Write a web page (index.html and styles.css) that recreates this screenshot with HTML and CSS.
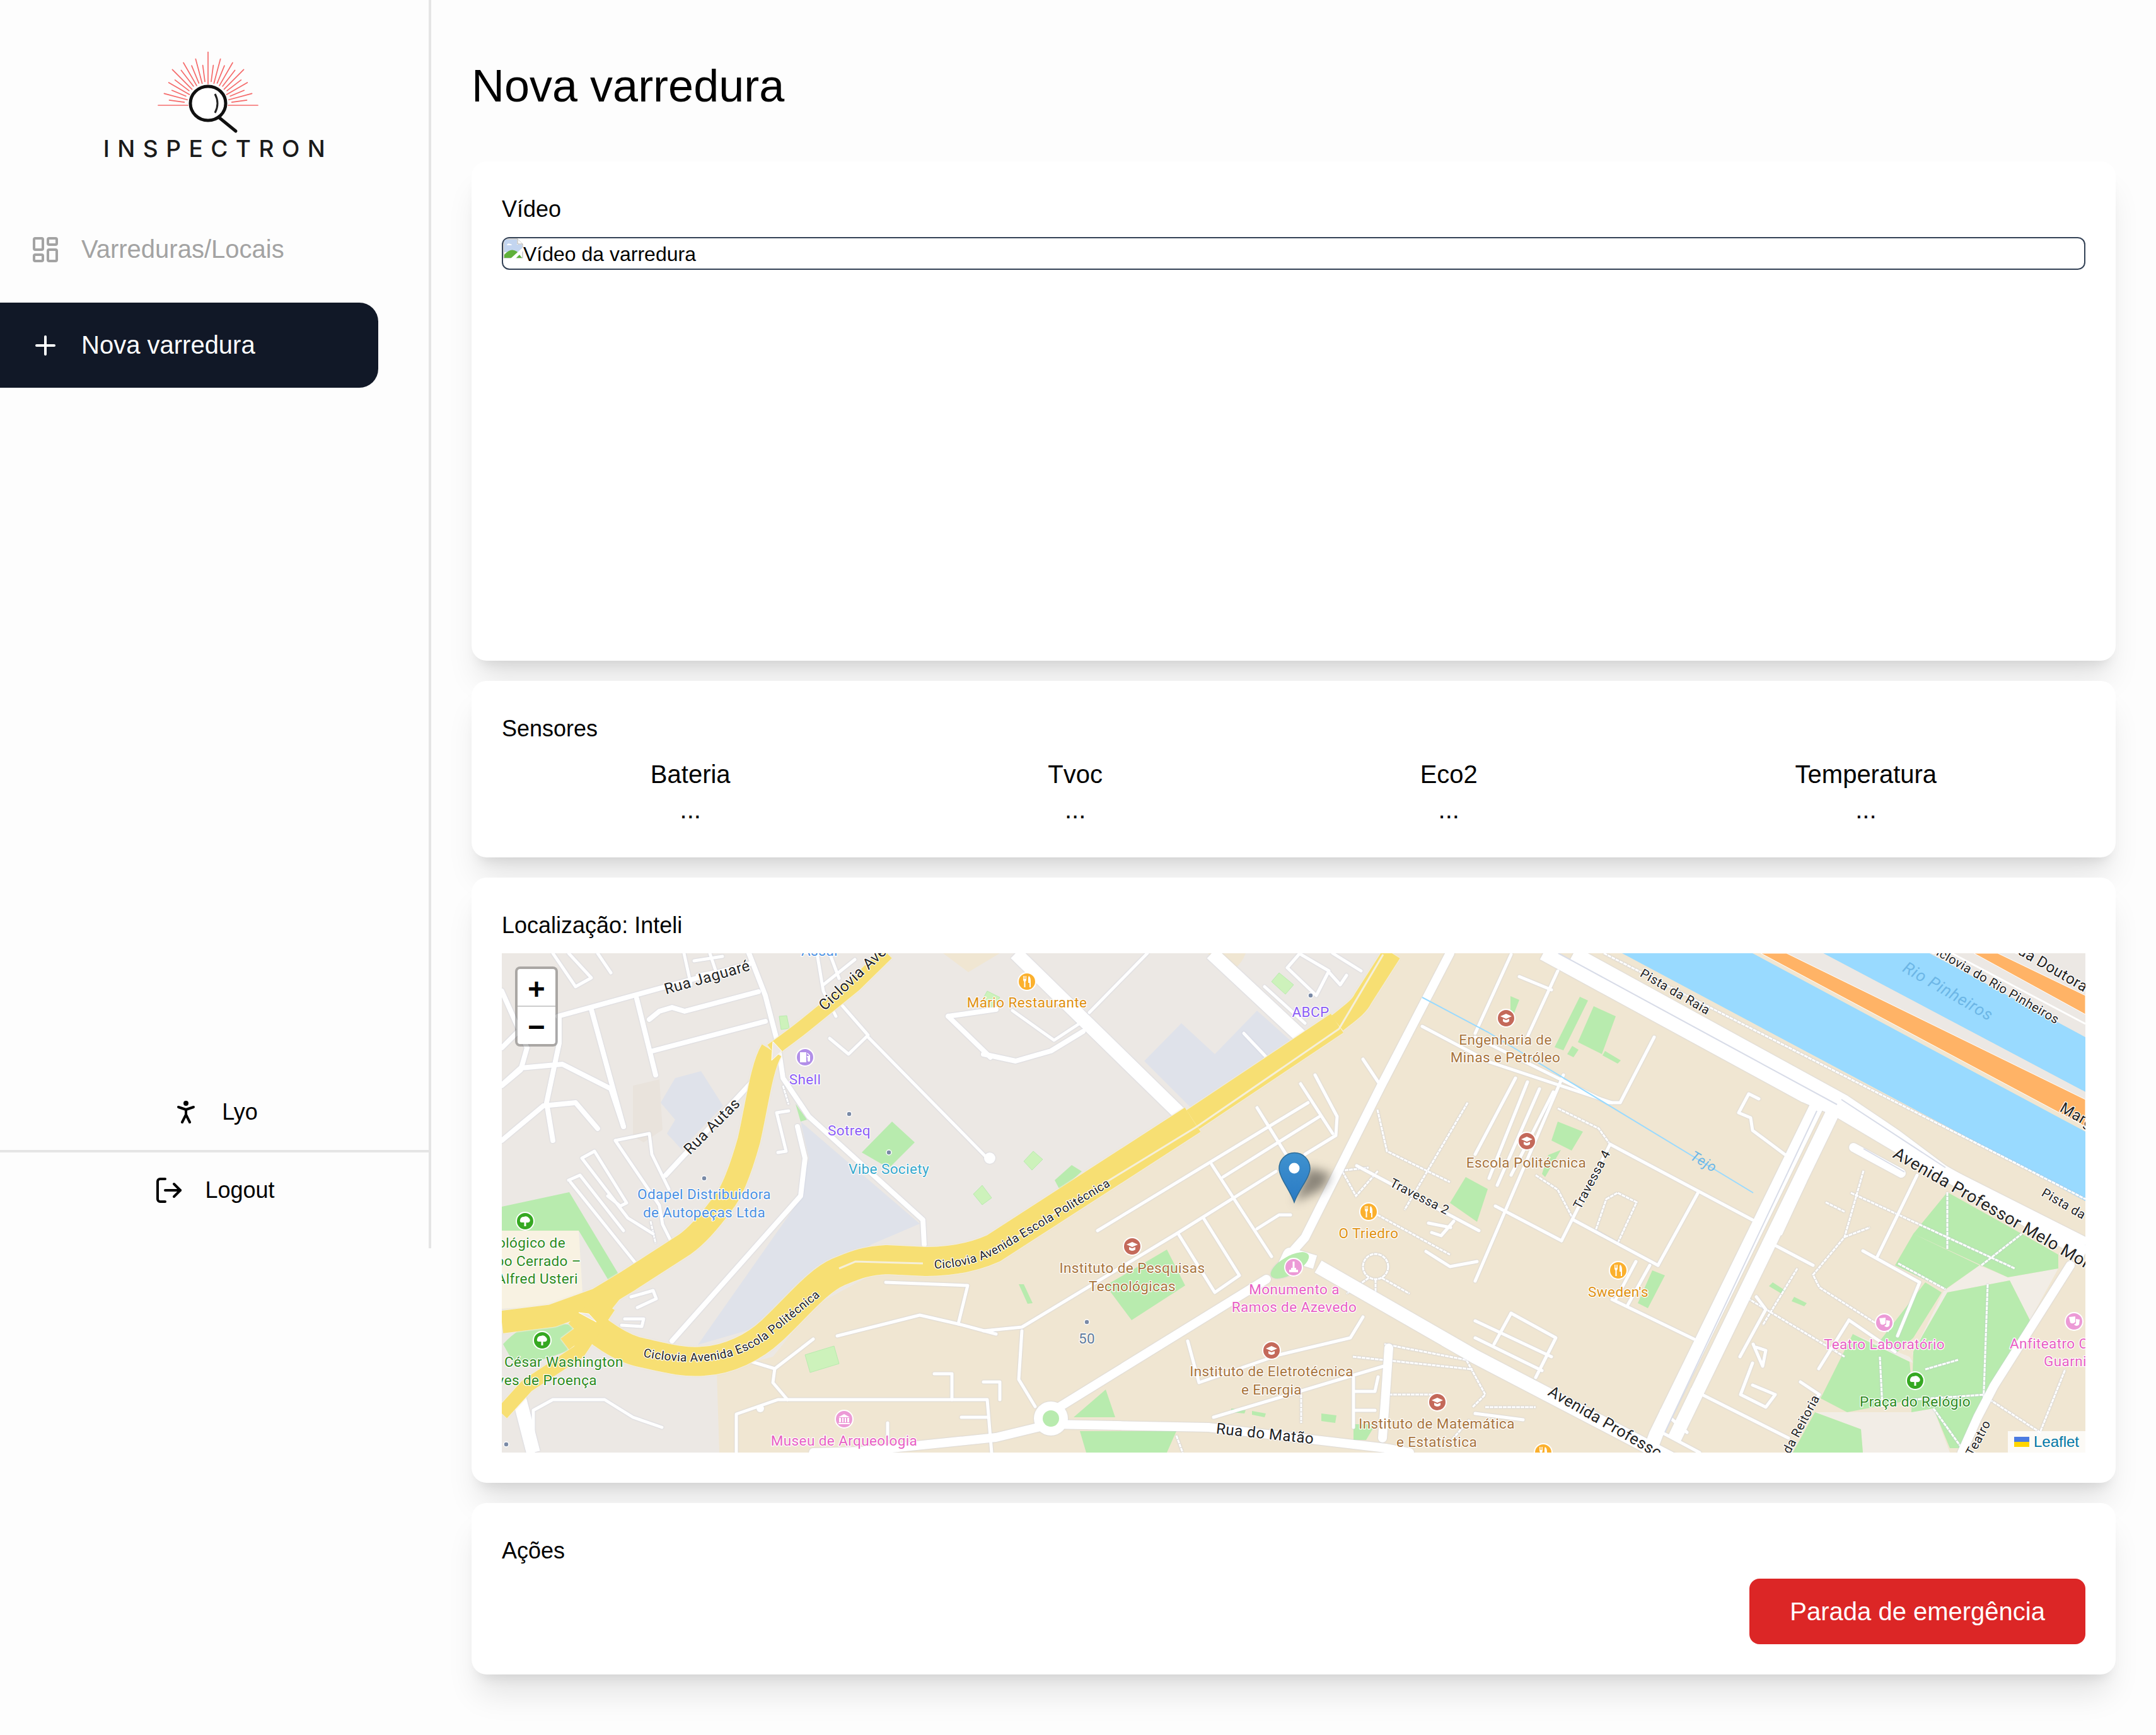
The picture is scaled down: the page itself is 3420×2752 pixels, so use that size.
FILE: index.html
```html
<!DOCTYPE html>
<html lang="pt-BR">
<head>
<meta charset="utf-8">
<title>Nova varredura</title>
<link rel="stylesheet" href="styles.css">
</head>
<body>
<div class="app">
  <aside class="sidebar">
    <div class="logo">
      <svg class="logo-mark" viewBox="0 0 168 130" width="168" height="130" aria-hidden="true">
        <g class="rays" transform="translate(80 85)">
          <line y1="-32" y2="-79" transform="rotate(-90)"/><line y1="-38" y2="-62" transform="rotate(-82.5)"/><line y1="-34" y2="-72" transform="rotate(-75)"/><line y1="-38" y2="-62" transform="rotate(-67.5)"/><line y1="-34" y2="-72" transform="rotate(-60)"/><line y1="-38" y2="-66" transform="rotate(-52.5)"/><line y1="-36" y2="-80" transform="rotate(-45)"/><line y1="-38" y2="-70" transform="rotate(-37.5)"/><line y1="-36" y2="-78" transform="rotate(-30)"/><line y1="-38" y2="-68" transform="rotate(-22.5)"/><line y1="-36" y2="-76" transform="rotate(-15)"/><line y1="-38" y2="-64" transform="rotate(-7.5)"/><line y1="-34" y2="-85" transform="rotate(0)"/><line y1="-38" y2="-64" transform="rotate(7.5)"/><line y1="-36" y2="-76" transform="rotate(15)"/><line y1="-38" y2="-68" transform="rotate(22.5)"/><line y1="-36" y2="-78" transform="rotate(30)"/><line y1="-38" y2="-70" transform="rotate(37.5)"/><line y1="-36" y2="-80" transform="rotate(45)"/><line y1="-38" y2="-66" transform="rotate(52.5)"/><line y1="-34" y2="-72" transform="rotate(60)"/><line y1="-38" y2="-62" transform="rotate(67.5)"/><line y1="-34" y2="-72" transform="rotate(75)"/><line y1="-38" y2="-62" transform="rotate(82.5)"/><line y1="-32" y2="-79" transform="rotate(90)"/>
        </g>
        <ellipse class="lens-bg" cx="80" cy="82" rx="29" ry="28"/>
        <ellipse class="lens" cx="80" cy="82" rx="28" ry="27"/>
        <path class="lens-thin" d="M91 67 Q99 82 91 97"/>
        <path class="lens" d="M97 104 L124 126"/>
      </svg>
      <div class="logo-word">INSPECTRON</div>
    </div>
    <nav class="nav">
      <a class="nav-item">
        <svg class="icon" viewBox="0 0 24 24"><rect x="3" y="3" width="7" height="9" rx="1"/><rect x="14" y="3" width="7" height="5" rx="1"/><rect x="14" y="12" width="7" height="9" rx="1"/><rect x="3" y="16" width="7" height="5" rx="1"/></svg>
        <span>Varreduras/Locais</span>
      </a>
      <a class="nav-item active">
        <svg class="icon" viewBox="0 0 24 24"><path d="M5 12h14"/><path d="M12 5v14"/></svg>
        <span>Nova varredura</span>
      </a>
    </nav>
    <div class="side-foot">
      <div class="foot-row foot-user">
        <svg class="icon" viewBox="0 0 24 24"><circle cx="12" cy="5" r="1"/><path d="m9 20 3-6 3 6"/><path d="m6 8 6 2 6-2"/><path d="M12 10v4"/></svg>
        <span>Lyo</span>
      </div>
      <div class="foot-row">
        <svg class="icon" viewBox="0 0 24 24"><path d="M9 21H5a2 2 0 0 1-2-2V5a2 2 0 0 1 2-2h4"/><path d="M16 17l5-5-5-5"/><path d="M21 12H9"/></svg>
        <span>Logout</span>
      </div>
    </div>
  </aside>

  <main class="main">
    <h1 class="title">Nova varredura</h1>

    <section class="card">
      <h2 class="card-label">Vídeo</h2>
      <div class="video-frame">
        <div class="broken">
          <svg class="broken-icon" viewBox="0 0 32 32" width="32" height="32" aria-hidden="true">
            <path class="bi-page" d="M1 1H23L31 9V31H1Z"/>
            <path class="bi-fold" d="M23 1V9H31"/>
            <path class="bi-sky" d="M2 2H22V10H30V22H2Z"/>
            <path class="bi-cloud" d="M6 11a3 3 0 0 1 5-2a2.500 2.500 0 0 1 3 2Z"/>
            <path class="bi-hill" d="M2 31V26Q12 14 22 21L30 31Z"/>
            <path class="bi-tear" d="M12 32L32 14V20L20 32Z"/>
          </svg>
          <span>Vídeo da varredura</span>
        </div>
      </div>
    </section>

    <section class="card">
      <h2 class="card-label">Sensores</h2>
      <div class="sensors">
        <div class="sensor"><div>Bateria</div><div>...</div></div>
        <div class="sensor"><div>Tvoc</div><div>...</div></div>
        <div class="sensor"><div>Eco2</div><div>...</div></div>
        <div class="sensor"><div>Temperatura</div><div>...</div></div>
      </div>
    </section>

    <section class="card">
      <h2 class="card-label">Localização: Inteli</h2>
      <div class="map">
        <svg class="map-svg" viewBox="0 0 2512 792" width="2512" height="792" aria-label="Mapa">
          <defs>
            <path id="t-cic1" d="M224 640 C290 652 360 655 420 612 L500 548 L520 530"/>
            <path id="t-cic2" d="M686 500 C720 500 760 492 800 468 L980 360"/>
            <symbol id="i-edu" viewBox="-15 -15 30 30" overflow="visible"><circle class="ic-edu" r="14"/><path class="gl" d="M-9 -3 L0 -7 L9 -3 L0 1Z M-5 1 V5 Q0 9 5 5 V1 L0 3Z"/></symbol>
            <symbol id="i-food" viewBox="-15 -15 30 30" overflow="visible"><circle class="ic-food" r="14"/><path class="gl" d="M-6 -9 H-5 V-4 H-4 V-9 H-3 V-4 H-2 V-9 H-1 V-3 Q-1 -1 -2.500 0 V9 H-4.500 V0 Q-6 -1 -6 -3Z M3 -9 Q6 -7 6 -1 V9 H4 V2 H2 V-5 Q2 -8 3 -9Z"/></symbol>
            <symbol id="i-tree" viewBox="-15 -15 30 30" overflow="visible"><circle class="ic-tree" r="14"/><path class="gl" d="M-1.500 8 V2 H-6 Q-9 1 -8 -2 Q-7 -7 -2 -7 Q3 -9 6 -5 Q9 -2 7 1 Q5 3 1.500 2 V8Z"/></symbol>
            <symbol id="i-art" viewBox="-15 -15 30 30" overflow="visible"><circle class="ic-art" r="14"/><path class="gl" d="M-8 -7 L2 -8 L2 1 Q-2 5 -6 2Z M3 -4 L9 -3 L8 5 Q4 9 0 5 L3 3Z"/></symbol>
            <symbol id="i-mus" viewBox="-15 -15 30 30" overflow="visible"><circle class="ic-art" r="14"/><path class="gl" d="M-9 -3 L0 -8 L9 -3Z M-8 -2 H-5 V5 H-8Z M-3 -2 H-1 V5 H-3Z M1 -2 H3 V5 H1Z M5 -2 H8 V5 H5Z M-9 6 H9 V8 H-9Z"/></symbol>
            <symbol id="i-mon" viewBox="-15 -15 30 30" overflow="visible"><circle class="ic-art" r="14"/><path class="gl" d="M-1.500 -9 H1.500 V1 H4 V4 H7 V8 H-7 V4 H-4 V1 H-1.500Z"/></symbol>
            <symbol id="i-fuel" viewBox="-15 -15 30 30" overflow="visible"><circle class="ic-fuel" r="14"/><path class="gl" d="M-8 -8 H2 V8 H-8Z M4 -7 L8 -3 V5 Q8 7 6 7 Q4 7 4 5 V0 H3 V-2 H6 V-3 L3 -6Z"/></symbol>
            <linearGradient id="pin" x1="0" y1="0" x2="0" y2="1"><stop offset="0" stop-color="#3f92cf"/><stop offset="1" stop-color="#2a7ac4"/></linearGradient>
            <filter id="blur6" x="-60%" y="-60%" width="220%" height="220%"><feGaussianBlur stdDeviation="8"/></filter>
          </defs>

          <path class="a-beige" d="M345 792 L341 664 L430 640 L494 560 L596 505 L700 495 L784 480 L1096 270 L1325 120 L1402 0 H2512 V792Z"/>
          <path class="a-beige" d="M1120 0 H1180 Q1170 25 1150 30Z"/>
          <path class="a-beige" d="M740 30 L790 0 H700 Z"/>

          <path class="a-pale" d="M0 440 H122 L128 538 L82 560 L0 564Z"/>
          <path class="a-green" d="M0 402 L107 379 L190 517 L173 525 L122 440 L66 440 L0 440Z"/>
          <path class="a-green" d="M2 620 Q30 590 60 585 L120 590 L128 606 L106 630 Q50 652 20 652Z"/>

          <path class="a-plaza" d="M2083 728 L2134 728 L2236 728 L2271 722 L2297 792 H2159 L2156 755Z M2287 536 L2344 495 L2389 514 L2469 500 L2424 582 L2392 519 L2293 538Z M2236 640 L2287 536 L2293 538 L2239 632Z M2143 604 L2233 640 L2239 650 L2180 625Z"/>
          <path class="a-green" d="M2293 379 L2411 445 L2347 495 L2239 445Z M2411 445 L2469 478 L2469 500 L2389 514 L2347 495Z M2239 445 L2344 495 L2290 533 L2210 495Z M2293 538 L2392 519 L2424 582 L2354 719 L2316 785 L2297 785 L2271 722 L2236 728 L2239 632Z M2143 604 L2233 648 L2239 708 L2134 728 L2092 706Z M2284 538 L2239 610 L2214 632 L2182 620 L2258 522Z M2083 728 L2156 755 L2159 792 H2048Z"/>

          <path class="a-water" d="M1777 0 H1984 L2512 283 V393 L2405 335Z"/>
          <path class="a-water" d="M2096 0 H2265 L2512 133 V220Z"/>
          <path class="a-grey" d="M2038 0 H2096 L2512 220 V232Z"/>
          <path class="a-grey" d="M2265 0 H2512 V133Z"/>
          <path class="a-orange" d="M1997 0 H2038 L2512 232 V275Z"/>
          <path class="a-orange" d="M2335 0 H2373 L2512 67 V97Z"/>
          <path class="a-ylw" d="M2440 0 H2512 V30Z"/>
          <path class="r-case-w" d="M2300 0 L2512 112"/>

          <path class="a-park" d="M252 237 L275 198 L316 187 L351 242 L285 311 L262 286 L275 264Z"/>
          <path class="a-park" d="M474 267 L663 429 L586 462 L509 516 L408 593 L311 621 L469 396 L487 325Z"/>
          <path class="a-park" d="M1019 171 L1078 111 L1131 160 L1198 91 L1256 143 L1096 248Z"/>
          <path class="a-tan" d="M208 210 L250 200 L255 280 L225 300 L208 290Z"/>

          <path class="a-green" d="M619 267 L655 300 L614 341 L571 316Z M904 336 L920 346 L886 377 L877 360Z M466 239 L484 264 L474 267Z M1055 470 L1084 527 L999 582 L958 527Z M958 692 L973 736 L907 736Z M917 758 L1070 758 L1055 792 L927 792Z M1504 396 L1529 355 L1564 374 L1547 426Z M1351 747 L1386 747 L1371 772 L1351 772Z M1710 69 L1723 75 L1684 154 L1670 149Z M1732 84 L1767 100 L1745 160 L1707 141Z M1675 267 L1715 283 L1697 313 L1665 297Z M1825 503 L1845 511 L1818 563 L1802 555Z M820 525 L828 525 L842 555 L834 556Z M1600 68 L1614 74 L1600 110Z M1698 147 L1708 153 L1700 165 L1690 160Z M1750 155 L1775 170 L1770 175 L1746 162Z M1660 320 L1680 312 L1655 355 L1650 350Z M2016 522 L2036 535 L2030 540 L2010 528Z M2050 545 L2070 555 L2066 560 L2046 552Z M1157 722 L1180 725 L1178 730 L1157 728Z M1190 726 L1212 730 L1210 736 L1190 732Z M1300 730 L1324 733 L1322 745 L1300 742Z"/>
          <path class="a-pale-g" d="M440 100 L452 99 L456 119 L443 121Z M762 368 L777 388 L762 399 L748 382Z M843 314 L858 327 L841 344 L828 330Z M481 637 L527 623 L535 651 L489 665Z M1233 31 L1256 50 L1243 65 L1221 45Z M770 60 L790 70 L778 88 L760 78Z"/>

          <g class="r-dash">
            <path d="M1748 0 L2405 335 L2512 390"/>
            <path d="M1389 248 L1404 314 L1504 363"/><path d="M1532 237 L1432 407"/><path d="M1330 345 L1375 340"/><path d="M1389 415 L1504 478"/><path d="M1330 340 L1355 385 L1390 345"/>
            <circle cx="1386" cy="497" r="20"/><path d="M1375 515 L1340 540"/><path d="M1396 515 L1440 540"/><path d="M1386 517 V550"/>
            <path d="M1675 246 L1740 278 L1758 303"/><path d="M1640 352 L1675 375 L1700 423"/><path d="M1752 390 L1770 380 L1800 395 L1770 460 L1735 440Z"/>
            <path d="M2160 345 L2130 450 L2080 510 L2090 530 L2200 600"/><path d="M2100 395 L2130 410"/><path d="M2140 380 L2400 500"/><path d="M2130 450 L2170 435"/>
            <path d="M1964 540 L2130 640"/><path d="M2055 500 L2000 590"/><path d="M2293 379 V470"/><path d="M2347 495 L2411 445"/><path d="M2357 525 L2350 720"/>
            <path d="M2215 492 L2290 533"/><path d="M2186 640 L2190 720"/><path d="M2258 660 L2310 645"/><path d="M2271 722 L2316 785"/><path d="M2239 708 L2354 700"/>
            <path d="M1400 620 L1530 645 L1560 700 L1540 720"/><path d="M1350 640 L1540 660"/><path d="M2348 700 L2440 760 L2480 660"/><path d="M1560 720 L1640 720"/>
            <path d="M1070 765 L1080 792"/><path d="M1268 700 V745"/><path d="M1400 700 L1480 700"/><path d="M1535 740 L1500 780"/>
            <path d="M509 527 L561 489 L668 492"/><path d="M446 210 L455 240"/><path d="M236 425 L244 460"/>
          </g>

          <g class="roads">
            <g class="w8">
              <path d="M89 100 L260 53 L392 17"/><path d="M214 72 L244 193"/><path d="M142 89 L193 275"/><path d="M234 105 L250 92 L270 86 L290 92 L407 61"/><path d="M239 155 L418 108"/>
              <path d="M91 100 L91 143 L71 237 L81 297"/><path d="M0 209 L30 182 L96 176 L173 215 L193 275"/><path d="M0 297 L66 242 L117 237 L152 278"/><path d="M260 352 L397 204"/><path d="M270 615 L474 385 L481 325 L469 275"/>
              <path d="M392 0 L418 67 L438 144 L446 198 L487 259 L668 423 L670 462"/><path d="M708 100 L775 165 M708 100 L784 89"/><path d="M764 160 L815 171 L871 155 L922 124"/>
              <path d="M0 60 L40 150 L30 185 L0 210"/><path d="M0 150 L40 110"/>
            </g>
            <g class="w5">
              <path d="M81 0 L117 53 L142 39 L106 0"/><path d="M152 0 L173 31"/><path d="M289 0 L300 50 M305 12 L350 5 M310 35 L335 30 M330 0 L340 30"/><path d="M180 297 L234 286 L238 319 L265 374 M180 297 L250 400 L255 430 L275 470"/>
              <path d="M127 325 L147 314 L198 396 L188 401 L168 385 M127 325 L200 420 L240 445"/><path d="M106 360 L124 352 L193 440 M109 363 L219 500"/>
              <path d="M436 253 L451 314 L438 316 M436 253 L455 250"/><path d="M581 133 L770 325"/><path d="M540 83 L581 130 L550 160 L520 135"/><path d="M810 91 L876 138 L917 111"/><path d="M932 94 L1024 0"/>
              <path d="M500 0 L510 60 L530 100 M520 0 L535 40 M510 50 L560 10"/><path d="M1177 127 L1213 165 L1187 193"/><path d="M1246 23 L1266 0 M1246 23 L1292 67 L1312 28 L1266 1 M1312 30 L1330 50 L1340 35"/><path d="M1318 0 L1363 28"/><path d="M1210 53 L1274 111"/>
              <path d="M1198 245 L1244 319"/><path d="M1126 335 L1221 481"/><path d="M945 440 L1279 237"/><path d="M1144 355 L1297 259"/><path d="M764 599 L825 593 L1070 445 L1228 346"/><path d="M1267 207 L1318 286"/><path d="M1290 193 L1325 259 L1323 289 L1274 319"/>
              <path d="M1073 445 L1131 538 L1170 511 L1113 420"/><path d="M1198 437 L1233 415 L1251 415"/><path d="M825 599 L820 676 L846 719"/><path d="M1088 615 L1106 681 L1233 637 L1346 610 L1366 577"/><path d="M1129 736 L1402 654"/>
              <path d="M1351 673 V752 M1390 672 L1385 695 L1351 695 M1351 725 L1385 725"/><path d="M1366 168 L1392 207"/><path d="M1356 337 L1550 440"/><path d="M1466 473 L1504 497 L1547 489"/><path d="M1470 428 L1505 435 M1475 443 L1490 448 L1510 425"/>
              <path d="M1601 2 L1544 127"/><path d="M1614 37 L1665 58"/><path d="M1675 28 L1627 132"/><path d="M1828 133 L1774 237 L1754 237 L1544 133"/><path d="M1460 116 L1564 171"/><path d="M1544 165 L1761 237"/>
              <path d="M1608 198 L1544 319"/><path d="M1627 204 L1566 357"/><path d="M1646 215 L1579 368"/><path d="M1668 220 L1601 352"/><path d="M1684 193 L1595 401 L1544 520"/>
              <path d="M1758 303 L1984 423"/><path d="M1898 379 L1834 495"/><path d="M1700 423 L1834 495"/><path d="M1758 303 L1681 456"/><path d="M1576 401 L1681 456"/>
              <path d="M1994 231 L1978 223 L1962 253 L1981 261 L1984 281 L2035 319"/><path d="M2067 363 L2029 445"/><path d="M2006 456 L2080 495"/><path d="M2245 352 L2182 481"/><path d="M2159 472 L2249 522 L2214 607"/>
              <path d="M1761 549 L1891 612"/><path d="M1821 495 L1786 558"/><path d="M1799 489 L1767 549"/><path d="M1601 571 L1672 610 L1640 673"/><path d="M1544 583 L1665 640"/><path d="M1544 610 L1650 662"/><path d="M1601 571 L1574 620"/>
              <path d="M1888 692 L2041 769"/><path d="M1964 640 L2005 565 L1990 545 M1990 625 L2005 630 L2000 655 L1985 620"/><path d="M2137 582 L2089 659"/><path d="M2137 582 L2210 632"/><path d="M1984 685 L2020 700 L2005 720 L1965 700 L1984 650"/><path d="M2060 680 L2090 700 L2070 725"/>
              <path d="M609 522 L739 527 L724 588 L663 574 L532 607"/><path d="M724 588 L784 604"/><path d="M397 648 L433 659 L494 612"/><path d="M433 659 L430 681 L453 708"/><path d="M372 792 L372 731 L438 708 L770 708 L777 792"/>
              <path d="M686 667 L714 667 L714 708"/><path d="M729 736 L770 736"/><path d="M612 745 V770"/><path d="M50 792 L50 725 L81 708 L163 708 L208 736 L254 752"/><path d="M205 545 L240 535 L245 548 L215 562 M195 580 L225 580 L222 592 L190 590"/>
              <path d="M1840 725 L1880 760 M1840 760 L1900 792"/><path d="M1544 730 L1620 740"/><path d="M764 680 L790 680 M790 680 L790 708"/>
            </g>
            <circle class="node" cx="774" cy="325" r="9"/><circle class="node" cx="410" cy="722" r="6"/>
            <g class="w14">
              <path d="M1504 0 L1395 210 L1274 451 L1250 478"/><path d="M1213 517 L876 725"/><path d="M494 792 L570 790 L784 768 L871 747 L1121 752 L1402 785 L1440 792"/><path d="M1407 626 L1397 769"/><path d="M2144 308 L2220 349"/><path d="M2488 495 L2367 686 L2341 736 L2316 792"/>
            </g>
            <g class="w24">
              <path d="M815 0 L1080 259"/><path d="M1126 0 L1274 138"/>
              <path d="M1652 0 L2067 226 L2118 248 L2246 324 L2512 476"/><path d="M1700 0 L2130 236 L2210 290 L2290 350 L2512 462"/>
              <path d="M2086 242 L1831 763 L1820 792"/><path d="M2110 255 L1860 770"/>
              <path d="M1295 497 L1544 640 L1870 810"/><path d="M1240 500 L1250 478 L1290 490"/><path d="M27 703 L50 792"/>
            </g>
            <circle class="node" cx="871" cy="738" r="27"/>
            <circle class="inner-g" cx="871" cy="738" r="13"/>
            <ellipse class="inner-g" cx="1250" cy="495" rx="34" ry="14" transform="rotate(-30 1250 495)"/>
          </g>

          <g class="r-line">
            <path d="M1676 0 L2118 240"/><path d="M2086 250 L1845 760"/><path d="M2125 232 L2290 340"/><path d="M2160 310 L2225 347"/>
          </g>
          <path class="river-thin" d="M1460 70 L1564 125 L1985 380"/>

          <g class="hw">
            <path class="w22" d="M611 0 L560 50 L480 115 C455 135 440 145 428 154"/>
            <path class="w36" d="M428 154 C412 180 405 240 392 297 C380 340 365 380 351 396 C330 425 310 448 290 462 L200 520 L152 549 L80 575 L0 585"/>
            <path class="w46" d="M122 571 C150 600 190 628 224 634 C260 642 290 650 320 647 C360 645 400 625 428 599 C470 560 500 520 535 505 C560 495 575 488 610 486 L673 489 C700 489 740 486 780 468 L1096 264"/>
            <path class="w36" d="M1096 264 L1325 111"/>
            <path class="w30" d="M1325 111 C1345 95 1360 85 1366 72 L1412 0"/>
            <path class="w22" d="M170 560 L122 632 L40 686 L0 730"/>
            <path class="w22" d="M200 515 L140 590 L100 620"/>
          </g>
          <path class="hw-div" d="M800 460 L1101 276 L1328 120 L1398 2"/>
          <path class="hw-div" d="M535 500 L561 489 L668 492"/>
          <path class="hw-isl" d="M122 570 L138 572 L150 585Z M430 140 L444 155 L428 170Z"/>

          <g class="lbl road">
            <text x="328" y="46" text-anchor="middle" transform="rotate(-16 328 46)">Rua Jaguaré</text>
            <text x="512" y="92" transform="rotate(-43 512 92)">Ciclovia Avenida</text>
            <text x="339" y="280" text-anchor="middle" transform="rotate(-45 339 280)">Rua Autas</text>
            <text class="s19"><textPath href="#t-cic1">Ciclovia Avenida Escola Politécnica</textPath></text>
            <text class="s19"><textPath href="#t-cic2">Ciclovia Avenida Escola Politécnica</textPath></text>
            <text x="1210" y="770" text-anchor="middle" transform="rotate(6 1210 770)">Rua do Matão</text>
            <text class="s20" x="1453" y="392" text-anchor="middle" transform="rotate(27 1453 392)">Travessa 2</text>
            <text class="s20" x="1735" y="362" text-anchor="middle" transform="rotate(-62 1735 362)">Travessa 4</text>
            <text class="s20" x="1858" y="67" text-anchor="middle" transform="rotate(30 1858 67)">Pista da Raia</text>
            <text class="s20" x="2364" y="54" text-anchor="middle" transform="rotate(30 2364 54)">Ciclovia do Rio Pinheiros</text>
            <text x="2510" y="62" text-anchor="end" transform="rotate(30 2510 62)">Rua Doutora</text>
            <text x="2470" y="250" transform="rotate(30 2470 250)">Marginal</text>
            <text class="s27" x="2205" y="323" transform="rotate(30 2205 323)">Avenida Professor Melo Moraes</text>
            <text class="s20" x="2441" y="384" transform="rotate(30 2441 384)">Pista da Raia</text>
            <text class="s25" x="1658" y="700" transform="rotate(30 1658 700)">Avenida Professor Lineu</text>
            <text class="s20" x="2067" y="750" text-anchor="middle" transform="rotate(-62 2067 750)">da Reitoria</text>
            <text class="s20" x="2348" y="772" text-anchor="middle" transform="rotate(-62 2348 772)">Teatro</text>
          </g>
          <g class="lbl-water">
            <text x="2290" y="68" text-anchor="middle" transform="rotate(30 2290 68)">Rio Pinheiros</text>
            <text class="thin" x="1903" y="337" text-anchor="middle" transform="rotate(30 1903 337)">Tejo</text>
          </g>

          <g class="dots">
            <circle cx="551" cy="255" r="4"/><circle cx="614" cy="316" r="4"/><circle cx="321" cy="357" r="4"/><circle cx="7" cy="779" r="4"/><circle cx="1283" cy="67" r="4"/><circle cx="928" cy="585" r="4"/>
          </g>

          <use href="#i-fuel" x="466" y="150" width="30" height="30"/>
          <use href="#i-tree" x="22" y="410" width="30" height="30"/>
          <use href="#i-tree" x="49" y="599" width="30" height="30"/>
          <use href="#i-mus" x="528" y="724" width="30" height="30"/>
          <use href="#i-food" x="818" y="30" width="30" height="30"/>
          <use href="#i-edu" x="1578" y="88" width="30" height="30"/>
          <use href="#i-edu" x="1611" y="283" width="30" height="30"/>
          <use href="#i-food" x="1360" y="395" width="30" height="30"/>
          <use href="#i-edu" x="985" y="450" width="30" height="30"/>
          <use href="#i-mon" x="1241" y="483" width="30" height="30"/>
          <use href="#i-edu" x="1206" y="615" width="30" height="30"/>
          <use href="#i-edu" x="1469" y="697" width="30" height="30"/>
          <use href="#i-food" x="1756" y="488" width="30" height="30"/>
          <use href="#i-art" x="2178" y="571" width="30" height="30"/>
          <use href="#i-art" x="2479" y="569" width="30" height="30"/>
          <use href="#i-tree" x="2227" y="663" width="30" height="30"/>
          <use href="#i-food" x="1637" y="777" width="30" height="30"/>

          <g class="lbl poi">
            <text class="c-blue" x="504" y="4" text-anchor="middle">Assuí</text>
            <text class="c-purple" x="481" y="208" text-anchor="middle">Shell</text>
            <text class="c-purple" x="551" y="289" text-anchor="middle">Sotreq</text>
            <text class="c-teal" x="614" y="350" text-anchor="middle">Vibe Society</text>
            <text class="c-blue" x="321" y="390" text-anchor="middle">Odapel Distribuidora</text>
            <text class="c-blue" x="321" y="419" text-anchor="middle">de Autopeças Ltda</text>
            <text class="c-green" x="101" y="467" text-anchor="end">Zoológico de</text>
            <text class="c-green" x="126" y="496" text-anchor="end">Campo Cerrado –</text>
            <text class="c-green" x="121" y="524" text-anchor="end">Alfred Usteri</text>
            <text class="c-green" x="4" y="656">César Washington</text>
            <text class="c-green" x="151" y="685" text-anchor="end">Neves de Proença</text>
            <text class="c-pink" x="543" y="781" text-anchor="middle">Museu de Arqueologia</text>
            <text class="c-orange" x="833" y="86" text-anchor="middle">Mário Restaurante</text>
            <text class="c-purple" x="1283" y="101" text-anchor="middle">ABCP</text>
            <text class="c-brown" x="1592" y="145" text-anchor="middle">Engenharia de</text>
            <text class="c-brown" x="1592" y="173" text-anchor="middle">Minas e Petróleo</text>
            <text class="c-brown" x="1625" y="340" text-anchor="middle">Escola Politécnica</text>
            <text class="c-orange" x="1375" y="452" text-anchor="middle">O Triedro</text>
            <text class="c-brown" x="1000" y="507" text-anchor="middle">Instituto de Pesquisas</text>
            <text class="c-brown" x="1000" y="536" text-anchor="middle">Tecnológicas</text>
            <text class="c-pink" x="1257" y="541" text-anchor="middle">Monumento a</text>
            <text class="c-pink" x="1257" y="569" text-anchor="middle">Ramos de Azevedo</text>
            <text class="c-slate" x="928" y="619" text-anchor="middle">50</text>
            <text class="c-brown" x="1221" y="671" text-anchor="middle">Instituto de Eletrotécnica</text>
            <text class="c-brown" x="1221" y="700" text-anchor="middle">e Energia</text>
            <text class="c-brown" x="1483" y="754" text-anchor="middle">Instituto de Matemática</text>
            <text class="c-brown" x="1483" y="783" text-anchor="middle">e Estatística</text>
            <text class="c-orange" x="1771" y="545" text-anchor="middle">Sweden's</text>
            <text class="c-pink" x="2193" y="628" text-anchor="middle">Teatro Laboratório</text>
            <text class="c-pink" x="2392" y="627">Anfiteatro Camargo</text>
            <text class="c-pink" x="2446" y="655">Guarnieri</text>
            <text class="c-green" x="2242" y="719" text-anchor="middle">Praça do Relógio</text>
          </g>

          <path class="pin-shadow" d="M1257 395 L1280 340 L1316 350 L1302 374Z" filter="url(#blur6)"/>
          <path class="pin" d="M1257 395 C1250 375 1233 356 1233 341 A24.500 24.500 0 0 1 1282 341 C1282 356 1264 375 1257 395Z" fill="url(#pin)"/>
          <circle class="pin-dot" cx="1257" cy="341" r="8.500"/>
        </svg>
        <div class="zoom-ctl">
          <a class="zoom-btn zoom-in">+</a>
          <a class="zoom-btn">−</a>
        </div>
        <div class="attrib">
          <svg class="flag" viewBox="0 0 12 8" width="24" height="16" aria-hidden="true"><path class="flag-b" d="M0 0H12V4H0Z"/><path class="flag-y" d="M0 4H12V8H0Z"/></svg>
          <span>Leaflet</span>
        </div>
      </div>
    </section>

    <section class="card">
      <h2 class="card-label">Ações</h2>
      <div class="actions"><button class="stop-btn">Parada de emergência</button></div>
    </section>
  </main>
</div>
</body>
</html>
```

FILE: styles.css
```css
* { box-sizing: border-box; }
html, body { margin: 0; padding: 0; }
body {
  background: #fdfdfd;
  color: #000;
  font-family: "Liberation Sans", Arial, sans-serif;
  font-size: 36px;
}
.app { display: flex; align-items: flex-start; min-height: 2752px; }

/* sidebar */
.sidebar {
  width: 684px;
  height: 1980px;
  flex: none;
  display: flex;
  flex-direction: column;
  border-right: 4px solid #e5e5e5;
}
.logo { padding-top: 82px; display: flex; flex-direction: column; align-items: center; }
.logo-mark { display: block; margin-left: -12px; }
.rays line { stroke: #f56a6a; stroke-width: 1.7; stroke-linecap: round; }
.lens-bg { fill: #fff; }
.lens { fill: none; stroke: #111; stroke-width: 5; stroke-linecap: round; }
.lens-thin { fill: none; stroke: #222; stroke-width: 3; }
.logo-word {
  margin-top: 8px;
  height: 32px;
  font-family: Inter, "DejaVu Sans", sans-serif;
  font-weight: 500;
  font-size: 37px;
  line-height: 32px;
  letter-spacing: 12.500px;
  margin-right: -12px;
  color: #1a1a1a;
  white-space: nowrap;
}
.nav { margin-top: 76px; display: flex; flex-direction: column; gap: 17px; width: 600px; }
.nav-item {
  height: 135px;
  display: flex;
  align-items: center;
  gap: 33px;
  padding-left: 48px;
  font-size: 40px;
  color: #a3a3a3;
  border-radius: 0 30px 30px 0;
}
.nav-item.active { background: #111827; color: #fff; }
.icon {
  width: 48px;
  height: 48px;
  flex: none;
  fill: none;
  stroke: currentColor;
  stroke-width: 2;
  stroke-linecap: round;
  stroke-linejoin: round;
}
.side-foot { margin-top: auto; padding-bottom: 32px; }
.foot-row {
  height: 120px;
  display: flex;
  align-items: center;
  justify-content: center;
  gap: 33px;
  font-size: 36px;
}
.foot-user { box-shadow: 0 4px 0 #e5e5e5; margin-bottom: 4px; }

/* main */
.main { flex: 1; min-width: 0; padding: 96px 64px; display: flex; flex-direction: column; gap: 32px; }
.title { margin: 0 0 48px; font-size: 72px; line-height: 80px; font-weight: 400; }
.card {
  background: #fff;
  border-radius: 24px;
  padding: 48px;
  box-shadow: 0 40px 50px -10px rgba(0,0,0,.1), 0 16px 20px -12px rgba(0,0,0,.1);
}
.card-label { margin: 0 0 16px; font-size: 36px; line-height: 56px; font-weight: 400; }

.video-frame { height: 624px; }
.broken {
  height: 52px;
  display: flex;
  align-items: center;
  border: 2px solid #334155;
  border-radius: 12px;
  font-size: 32px;
  line-height: 48px;
  overflow: hidden;
}
.broken span { padding-top: 2px; }
.broken-icon { flex: none; align-self: flex-start; }
.bi-page { fill: #fff; stroke: #a8a8a8; stroke-width: 1; }
.bi-fold { fill: #fff; stroke: #a8a8a8; stroke-width: 1; }
.bi-sky { fill: #c3d5f0; }
.bi-cloud { fill: #fff; }
.bi-hill { fill: #5fb03a; }
.bi-tear { fill: #fff; }

.sensors { display: flex; justify-content: space-around; gap: 32px; text-align: center; }
.sensor { font-size: 40px; line-height: 56px; }

.map { position: relative; width: 100%; height: 792px; overflow: hidden; }
.map-svg { display: block; background: #ece8e4; }
.zoom-ctl {
  position: absolute;
  left: 21px;
  top: 21px;
  width: 68px;
  border: 4px solid rgba(0,0,0,.28);
  border-radius: 8px;
  background: #fff;
  background-clip: padding-box;
}
.zoom-btn {
  display: block;
  height: 59px;
  text-align: center;
  font-family: "DejaVu Sans Mono", "Liberation Mono", monospace;
  font-weight: 700;
  font-size: 44px;
  line-height: 62px;
  color: #000;
}
.zoom-in { border-bottom: 2px solid #ccc; height: 60px; }
.attrib {
  position: absolute;
  right: 0;
  bottom: 0;
  height: 34px;
  padding: 0 10px;
  display: flex;
  align-items: center;
  gap: 7px;
  background: rgba(255,255,255,.8);
  font-size: 24px;
  color: #0078a8;
}
.flag-b { fill: #4c7be1; }
.flag-y { fill: #ffd500; }

/* map areas */
.a-beige { fill: #f0e6d2; }
.a-pale { fill: #f8f2e2; }
.a-green { fill: #b8ebae; }
.a-pale-g { fill: #cdf2bb; stroke: #b8ebae; stroke-width: 1; }
.a-plaza { fill: #f2ede6; }
.a-water { fill: #99daff; }
.a-grey { fill: #ece8e4; }
.a-orange { fill: #ffb366; stroke: #fff; stroke-width: 1; }
.a-ylw { fill: #ece8e4; }
.a-park { fill: #dfe2ea; }
.a-tan { fill: #e9e3dc; }
.r-case-w { fill: none; stroke: #fff; stroke-width: 3; }
.r-dash { fill: none; stroke: #fff; stroke-width: 3; stroke-dasharray: 6 1; filter: drop-shadow(0 0 1px #b9bfcf); }
.roads { filter: drop-shadow(0 0 1px #c6cbdb); }
.roads path { fill: none; stroke: #fff; stroke-linecap: round; stroke-linejoin: round; }
.w5 path { stroke-width: 5; }
.w8 path { stroke-width: 8; }
.w14 path { stroke-width: 14; }
.w24 path { stroke-width: 22; stroke-linecap: butt; }
.node { fill: #fff; }
.inner-g { fill: #b8ebae; }
.r-line { fill: none; stroke: #d8dce8; stroke-width: 2; }
.river-thin { fill: none; stroke: #99daff; stroke-width: 2; }
.hw { filter: drop-shadow(0 0 1px #fff) drop-shadow(0 0 1px #e6dcc0); }
.hw path { fill: none; stroke: #f7df73; stroke-linejoin: round; }
.hw .w22 { stroke-width: 22; }
.hw .w30 { stroke-width: 30; }
.hw .w36 { stroke-width: 36; }
.hw .w46 { stroke-width: 46; }
.hw-div { fill: none; stroke: #f5efd9; stroke-width: 3; }
.hw-isl { fill: #ede8e4; stroke: #fff; stroke-width: 1; }
.dots circle { fill: #7a8aa6; stroke: #fff; stroke-width: 1.500; }

/* map labels */
.lbl text, .lbl-water text {
  font-family: Roboto, "Noto Sans", sans-serif;
  paint-order: stroke;
  stroke: #fff;
  stroke-width: 2.500px;
  stroke-linejoin: round;
}
.road text { font-size: 24px; fill: #222; letter-spacing: .6px; }
.road .s20 { font-size: 20px; }
.road .s19 { font-size: 19px; letter-spacing: .45px; }
.road .s25 { font-size: 25px; }
.road .s27 { font-size: 27px; }
.poi text { font-size: 22.500px; letter-spacing: .4px; }
.lbl-water text { font-size: 26px; fill: #6cb6e6; font-style: italic; stroke: none; letter-spacing: 1px; }
.lbl-water .thin { font-size: 22px; }
.c-blue { fill: #4a90e2; }
.c-purple { fill: #8b5cf6; }
.c-teal { fill: #36a8cc; }
.c-green { fill: #2c8a1c; }
.c-pink { fill: #e85fc4; }
.c-orange { fill: #e0900f; }
.c-brown { fill: #a8733b; }
.c-slate { fill: #5f7a99; }
.ic-edu, .ic-food, .ic-tree, .ic-art, .ic-fuel { stroke: #fff; stroke-width: 2; }
.ic-edu { fill: #c4695a; }
.ic-food { fill: #fbb02d; }
.ic-tree { fill: #35a821; }
.ic-art { fill: #ec9ad6; }
.ic-fuel { fill: #b28fe8; }
.gl { fill: #fff; }
.pin { stroke: #2e6c97; stroke-width: 1.500; }
.pin-dot { fill: #fff; }
.pin-shadow { fill: rgba(0,0,0,.42); }

.actions { display: flex; justify-content: flex-end; }
.stop-btn {
  height: 104px;
  padding: 0 64px;
  border: 0;
  border-radius: 16px;
  background: #dc2626;
  color: #fff;
  font-family: inherit;
  font-size: 40px;
}
```
